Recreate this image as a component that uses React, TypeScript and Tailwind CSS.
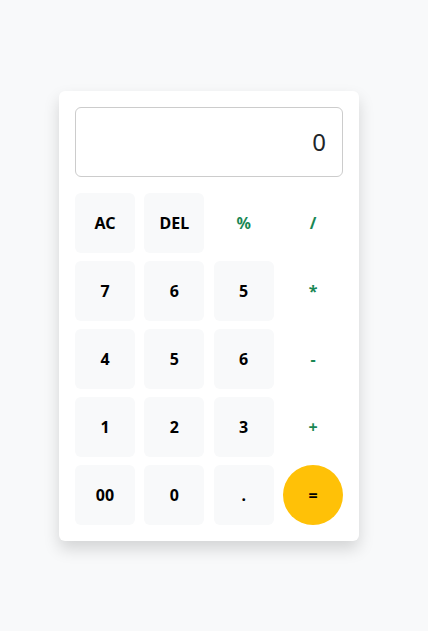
import React from "react";

type B = { label: string; kind: "num" | "op" | "eq" };

const rows: B[][] = [
  [
    { label: "AC", kind: "num" },
    { label: "DEL", kind: "num" },
    { label: "%", kind: "op" },
    { label: "/", kind: "op" },
  ],
  [
    { label: "7", kind: "num" },
    { label: "6", kind: "num" },
    { label: "5", kind: "num" },
    { label: "*", kind: "op" },
  ],
  [
    { label: "4", kind: "num" },
    { label: "5", kind: "num" },
    { label: "6", kind: "num" },
    { label: "-", kind: "op" },
  ],
  [
    { label: "1", kind: "num" },
    { label: "2", kind: "num" },
    { label: "3", kind: "num" },
    { label: "+", kind: "op" },
  ],
  [
    { label: "00", kind: "num" },
    { label: "0", kind: "num" },
    { label: ".", kind: "num" },
    { label: "=", kind: "eq" },
  ],
];

export default function App() {
  return (
    <div
      className="min-h-screen bg-[#f8f9fa] flex items-center pl-[59px]"
      style={{ fontFamily: '"Noto Sans", "Open Sans", sans-serif' }}
    >
      <div className="w-[300px] bg-white rounded-md shadow-[0_8px_16px_rgba(0,0,0,0.15)] p-4">
        <div className="h-[70px] border border-[#cccccc] rounded-md flex items-center justify-end px-4 text-[24px] text-[#212529]">
          0
        </div>
        <div className="mt-4 flex flex-col gap-2">
          {rows.map((r, i) => (
            <div key={i} className="flex justify-between">
              {r.map((b, j) => (
                <button
                  key={j}
                  className={
                    b.kind === "num"
                      ? "w-[60px] h-[60px] rounded-md bg-[#f8f9fa] text-black font-bold text-[16px] pt-[1px]"
                      : b.kind === "op"
                      ? "w-[60px] h-[60px] rounded-md bg-white text-[#198754] font-bold text-[16px] pt-[1px]"
                      : "w-[60px] h-[60px] rounded-full bg-[#ffc107] text-black font-bold text-[16px] pt-[1px]"
                  }
                >
                  {b.label}
                </button>
              ))}
            </div>
          ))}
        </div>
      </div>
    </div>
  );
}
